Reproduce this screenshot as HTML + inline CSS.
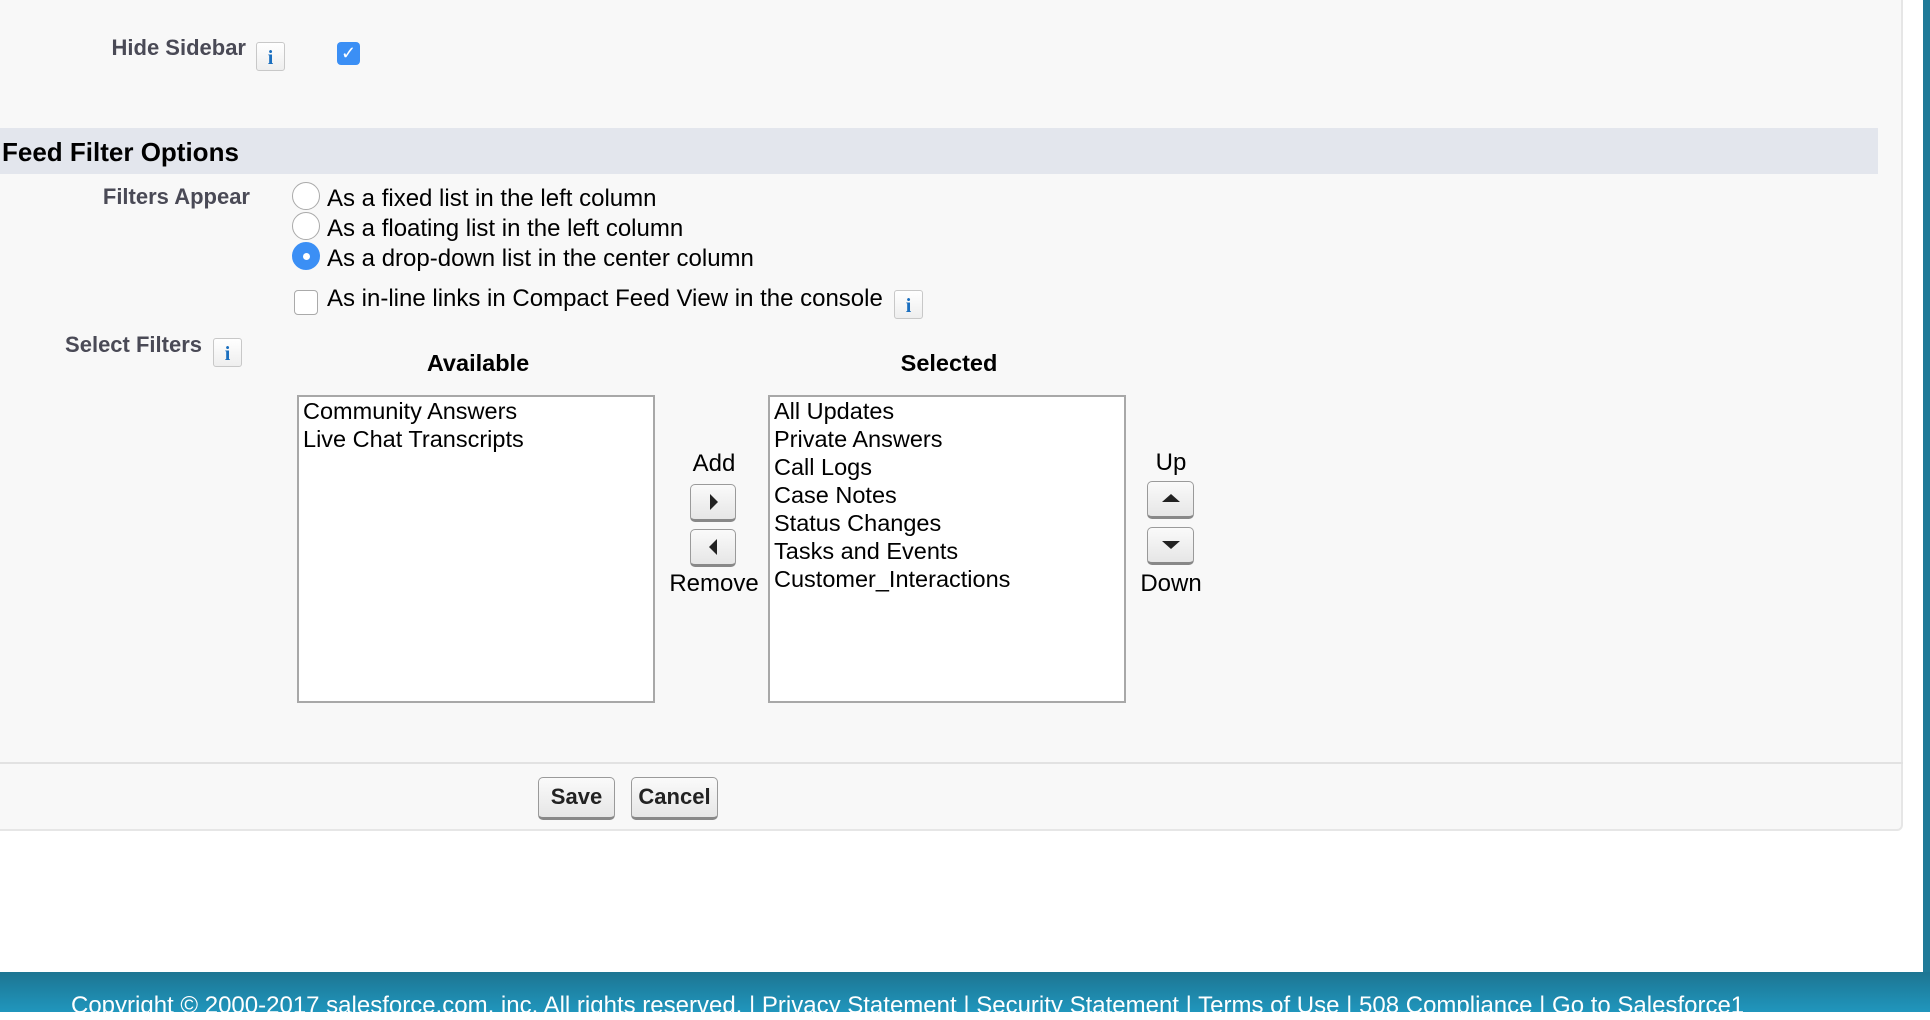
<!DOCTYPE html>
<html><head><meta charset="utf-8"><style>
*{margin:0;padding:0;box-sizing:border-box}
body{width:1930px;height:1012px;position:relative;overflow:hidden;background:#fff;font-family:"Liberation Sans",Arial,sans-serif;color:#000}
.a{position:absolute}
.panel{left:-4px;top:-10px;width:1907px;height:841px;background:#f8f8f8;border:2px solid #e6e6e6;border-radius:0 0 6px 0}
.lbl{font-weight:bold;color:#4a4a56;font-size:22px;text-align:right}
.info{width:29px;height:29px;border:1px solid #c8c8c8;border-radius:3px;background:linear-gradient(#fff,#eee);color:#1b6fbf;font-family:"Liberation Serif",serif;font-weight:bold;font-size:20px;text-align:center;line-height:30px}
.t{font-size:24px;white-space:nowrap}
.radio{width:28px;height:28px;border-radius:50%;border:1px solid #aaa;background:#fff}
.box{background:#fff;border:2px solid #a8a8a8}
.item{font-size:23.5px;line-height:28px;padding-left:4px;padding-top:0px}
.btn{border:1px solid #9a9a9a;border-bottom:3px solid #888;border-radius:5px;background:linear-gradient(#fafafa,#e6e6e6)}
.tri{position:absolute;left:50%;top:50%;width:0;height:0}
</style></head><body>
<div class="a panel"></div>
<div class="a lbl" style="left:60px;top:35px;width:186px">Hide Sidebar</div>
<div class="a info" style="left:256px;top:42px">i</div>
<div class="a" style="left:337px;top:42px;width:23px;height:23px;background:#3b8ff5;border-radius:4px;color:#fff;font-size:18px;text-align:center;line-height:23px">✓</div>
<div class="a" style="left:0;top:128px;width:1878px;height:46px;background:#e3e6ed"></div>
<div class="a" style="left:2px;top:137px;font-size:26px;font-weight:bold">Feed Filter Options</div>
<div class="a lbl" style="left:40px;top:184px;width:210px">Filters Appear</div>
<div class="a radio" style="left:292px;top:182px"></div>
<div class="a t" style="left:327px;top:185px">As a fixed list in the left column</div>
<div class="a radio" style="left:292px;top:212px"></div>
<div class="a t" style="left:327px;top:215px">As a floating list in the left column</div>
<div class="a radio" style="left:292px;top:242px;background:#3b8ff5;border-color:#3b8ff5"><div style="position:absolute;left:10px;top:10px;width:7px;height:7px;border-radius:50%;background:#fff"></div></div>
<div class="a t" style="left:327px;top:245px">As a drop-down list in the center column</div>
<div class="a" style="left:294px;top:290px;width:24px;height:25px;border:1px solid #aaa;border-radius:4px;background:#fff"></div>
<div class="a t" style="left:327px;top:285px">As in-line links in Compact Feed View in the console</div>
<div class="a info" style="left:894px;top:290px">i</div>
<div class="a lbl" style="left:20px;top:332px;width:182px">Select Filters</div>
<div class="a info" style="left:213px;top:338px">i</div>
<div class="a" style="left:378px;top:350px;width:200px;text-align:center;font-weight:bold;font-size:23.5px">Available</div>
<div class="a" style="left:849px;top:350px;width:200px;text-align:center;font-weight:bold;font-size:23.5px">Selected</div>
<div class="a box" style="left:297px;top:395px;width:358px;height:308px"><div class="item">Community Answers<br>Live Chat Transcripts</div></div>
<div class="a box" style="left:768px;top:395px;width:358px;height:308px"><div class="item">All Updates<br>Private Answers<br>Call Logs<br>Case Notes<br>Status Changes<br>Tasks and Events<br>Customer_Interactions</div></div>
<div class="a t" style="left:664px;top:450px;width:100px;text-align:center">Add</div>
<div class="a btn" style="left:690px;top:484px;width:46px;height:38px"><div class="tri" style="margin:-8px 0 0 -3px;border-left:8px solid #222;border-top:8px solid transparent;border-bottom:8px solid transparent"></div></div>
<div class="a btn" style="left:690px;top:529px;width:46px;height:38px"><div class="tri" style="margin:-8px 0 0 -4px;border-right:8px solid #222;border-top:8px solid transparent;border-bottom:8px solid transparent"></div></div>
<div class="a t" style="left:664px;top:570px;width:100px;text-align:center">Remove</div>
<div class="a t" style="left:1121px;top:449px;width:100px;text-align:center">Up</div>
<div class="a btn" style="left:1147px;top:481px;width:47px;height:38px"><div class="tri" style="margin:-5px 0 0 -9px;border-bottom:8px solid #222;border-left:9px solid transparent;border-right:9px solid transparent"></div></div>
<div class="a btn" style="left:1147px;top:527px;width:47px;height:38px"><div class="tri" style="margin:-4px 0 0 -9px;border-top:8px solid #222;border-left:9px solid transparent;border-right:9px solid transparent"></div></div>
<div class="a t" style="left:1121px;top:570px;width:100px;text-align:center">Down</div>
<div class="a" style="left:0;top:762px;width:1903px;height:2px;background:#e2e2e2"></div>
<div class="a btn" style="left:538px;top:777px;width:77px;height:43px;font-weight:bold;font-size:22px;text-align:center;line-height:38px;color:#222">Save</div>
<div class="a btn" style="left:631px;top:777px;width:87px;height:43px;font-weight:bold;font-size:22px;text-align:center;line-height:38px;color:#222">Cancel</div>
<div class="a" style="left:1923px;top:0;width:7px;height:1012px;background:#1f7a98"></div>
<div class="a" style="left:0;top:972px;width:1930px;height:40px;background:linear-gradient(#1d7592,#2096bd)"></div>
<div class="a" style="left:71px;top:992px;color:#fff;font-size:24px;white-space:nowrap">Copyright © 2000-2017 salesforce.com, inc. All rights reserved. | Privacy Statement | Security Statement | Terms of Use | 508 Compliance | Go to Salesforce1</div>
</body></html>
